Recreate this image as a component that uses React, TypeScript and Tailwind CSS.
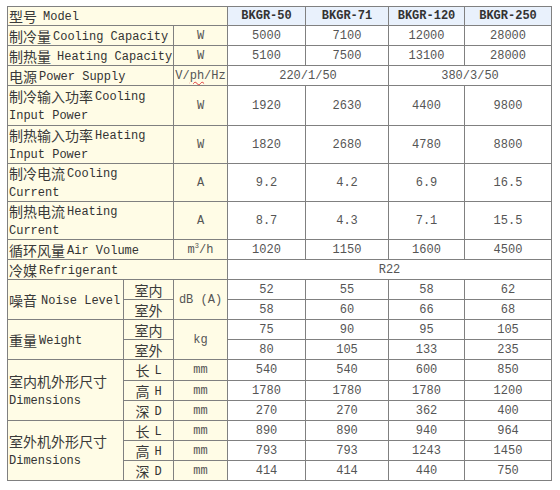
import React from "react";

const zh = "leading-none text-[14px] font-['Noto_Sans_CJK_SC',sans-serif] text-[#3a3a3a]";
const en = "leading-none text-[12px] font-['Liberation_Mono','Noto_Sans_CJK_SC',monospace] text-[#333] translate-y-[1px]";

const labelCls =
  "flex items-center bg-[#fffce6] whitespace-nowrap pl-px overflow-hidden";
const label2Cls =
  "flex flex-col justify-center items-start bg-[#fffce6] whitespace-nowrap pl-px overflow-hidden";
const unitCls =
  "flex items-center justify-center bg-[#fffce6] whitespace-nowrap text-[12px] text-[#555] font-['Liberation_Mono',monospace]";
const dataCls =
  "flex items-center justify-center bg-white whitespace-nowrap text-[12px] text-[#555] font-['Liberation_Mono',monospace]";
const subCls = "flex items-center justify-center bg-[#fffce6] whitespace-nowrap";

function Zh({ children }: { children: React.ReactNode }) {
  return <span className={zh}>{children}</span>;
}
function En({ children, gap = "ml-[2px]" }: { children: React.ReactNode; gap?: string }) {
  return <span className={en + " " + gap}>{children}</span>;
}
function Line({ children }: { children: React.ReactNode }) {
  return <div className="flex h-[19px] items-center">{children}</div>;
}

function Data({ v }: { v: string[] }) {
  return (
    <>
      {v.map((x, i) => (
        <div key={i} className={dataCls}>
          {x}
        </div>
      ))}
    </>
  );
}

function Sub({ z, e }: { z: string; e?: string }) {
  return (
    <div className={subCls}>
      <Zh>{z}</Zh>
      {e ? <En gap="ml-[5px]">{e}</En> : null}
    </div>
  );
}

export default function App() {
  return (
    <div className="w-[560px] h-[490px] bg-white pt-[6px] pl-[7px]">
      <div className="grid w-max grid-cols-[115px_49px_53px_77px_82px_75px_86px] grid-rows-[18px_19px_19px_19px_39px_37px_37px_37px_19px_19px_19px_19px_19px_19px_20px_19px_19px_19px_19px_19px] gap-px bg-[#808080] p-px">
        {/* header */}
        <div className={labelCls + " col-span-3"}>
          <Zh>型号</Zh>
          <En gap="ml-[6px]">Model</En>
        </div>
        {["BKGR-50", "BKGR-71", "BKGR-120", "BKGR-250"].map((h) => (
          <div
            key={h}
            className="flex items-center justify-center bg-[#e9f1fc] text-[12px] font-bold text-[#333] font-['Liberation_Mono',monospace]"
          >
            {h}
          </div>
        ))}

        {/* cooling capacity */}
        <div className={labelCls + " col-span-2"}>
          <Zh>制冷量</Zh>
          <En>Cooling Capacity</En>
        </div>
        <div className={unitCls}>W</div>
        <Data v={["5000", "7100", "12000", "28000"]} />

        {/* heating capacity */}
        <div className={labelCls + " col-span-2"}>
          <Zh>制热量</Zh>
          <En gap="ml-[6px]">Heating Capacity</En>
        </div>
        <div className={unitCls}>W</div>
        <Data v={["5100", "7500", "13100", "28000"]} />

        {/* power supply */}
        <div className={labelCls + " col-span-2"}>
          <Zh>电源</Zh>
          <En>Power Supply</En>
        </div>
        <div className={unitCls}>
          V/
          <span className="underline decoration-wavy decoration-[#e04040] decoration-1 underline-offset-2">
            ph
          </span>
          /Hz
        </div>
        <div className={dataCls + " col-span-2"}>220/1/50</div>
        <div className={dataCls + " col-span-2"}>380/3/50</div>

        {/* cooling input power */}
        <div className={label2Cls + " col-span-2"}>
          <Line>
            <Zh>制冷输入功率</Zh>
            <En>Cooling</En>
          </Line>
          <Line>
            <En gap="">Input Power</En>
          </Line>
        </div>
        <div className={unitCls}>W</div>
        <Data v={["1920", "2630", "4400", "9800"]} />

        {/* heating input power */}
        <div className={label2Cls + " col-span-2"}>
          <Line>
            <Zh>制热输入功率</Zh>
            <En>Heating</En>
          </Line>
          <Line>
            <En gap="">Input Power</En>
          </Line>
        </div>
        <div className={unitCls}>W</div>
        <Data v={["1820", "2680", "4780", "8800"]} />

        {/* cooling current */}
        <div className={label2Cls + " col-span-2"}>
          <Line>
            <Zh>制冷电流</Zh>
            <En>Cooling</En>
          </Line>
          <Line>
            <En gap="">Current</En>
          </Line>
        </div>
        <div className={unitCls}>A</div>
        <Data v={["9.2", "4.2", "6.9", "16.5"]} />

        {/* heating current */}
        <div className={label2Cls + " col-span-2"}>
          <Line>
            <Zh>制热电流</Zh>
            <En>Heating</En>
          </Line>
          <Line>
            <En gap="">Current</En>
          </Line>
        </div>
        <div className={unitCls}>A</div>
        <Data v={["8.7", "4.3", "7.1", "15.5"]} />

        {/* air volume */}
        <div className={labelCls + " col-span-2"}>
          <Zh>循环风量</Zh>
          <En>Air Volume</En>
        </div>
        <div className={unitCls}>
          m<sup className="text-[7px] -top-[4px]">3</sup>/h
        </div>
        <Data v={["1020", "1150", "1600", "4500"]} />

        {/* refrigerant */}
        <div className={labelCls + " col-span-3"}>
          <Zh>冷媒</Zh>
          <En>Refrigerant</En>
        </div>
        <div className={dataCls + " col-span-4"}>R22</div>

        {/* noise */}
        <div className={labelCls + " row-span-2"}>
          <Zh>噪音</Zh>
          <En gap="ml-[4px]">Noise Level</En>
        </div>
        <Sub z="室内" />
        <div className={unitCls + " row-span-2"}>dB (A)</div>
        <Data v={["52", "55", "58", "62"]} />
        <Sub z="室外" />
        <Data v={["58", "60", "66", "68"]} />

        {/* weight */}
        <div className={labelCls + " row-span-2"}>
          <Zh>重量</Zh>
          <En>Weight</En>
        </div>
        <Sub z="室内" />
        <div className={unitCls + " row-span-2"}>kg</div>
        <Data v={["75", "90", "95", "105"]} />
        <Sub z="室外" />
        <Data v={["80", "105", "133", "235"]} />

        {/* indoor dimensions */}
        <div className={label2Cls + " row-span-3"}>
          <Line>
            <Zh>室内机外形尺寸</Zh>
          </Line>
          <Line>
            <En gap="">Dimensions</En>
          </Line>
        </div>
        <Sub z="长" e="L" />
        <div className={unitCls}>mm</div>
        <Data v={["540", "540", "600", "850"]} />
        <Sub z="高" e="H" />
        <div className={unitCls}>mm</div>
        <Data v={["1780", "1780", "1780", "1200"]} />
        <Sub z="深" e="D" />
        <div className={unitCls}>mm</div>
        <Data v={["270", "270", "362", "400"]} />

        {/* outdoor dimensions */}
        <div className={label2Cls + " row-span-3"}>
          <Line>
            <Zh>室外机外形尺寸</Zh>
          </Line>
          <Line>
            <En gap="">Dimensions</En>
          </Line>
        </div>
        <Sub z="长" e="L" />
        <div className={unitCls}>mm</div>
        <Data v={["890", "890", "940", "964"]} />
        <Sub z="高" e="H" />
        <div className={unitCls}>mm</div>
        <Data v={["793", "793", "1243", "1450"]} />
        <Sub z="深" e="D" />
        <div className={unitCls}>mm</div>
        <Data v={["414", "414", "440", "750"]} />
      </div>
    </div>
  );
}
